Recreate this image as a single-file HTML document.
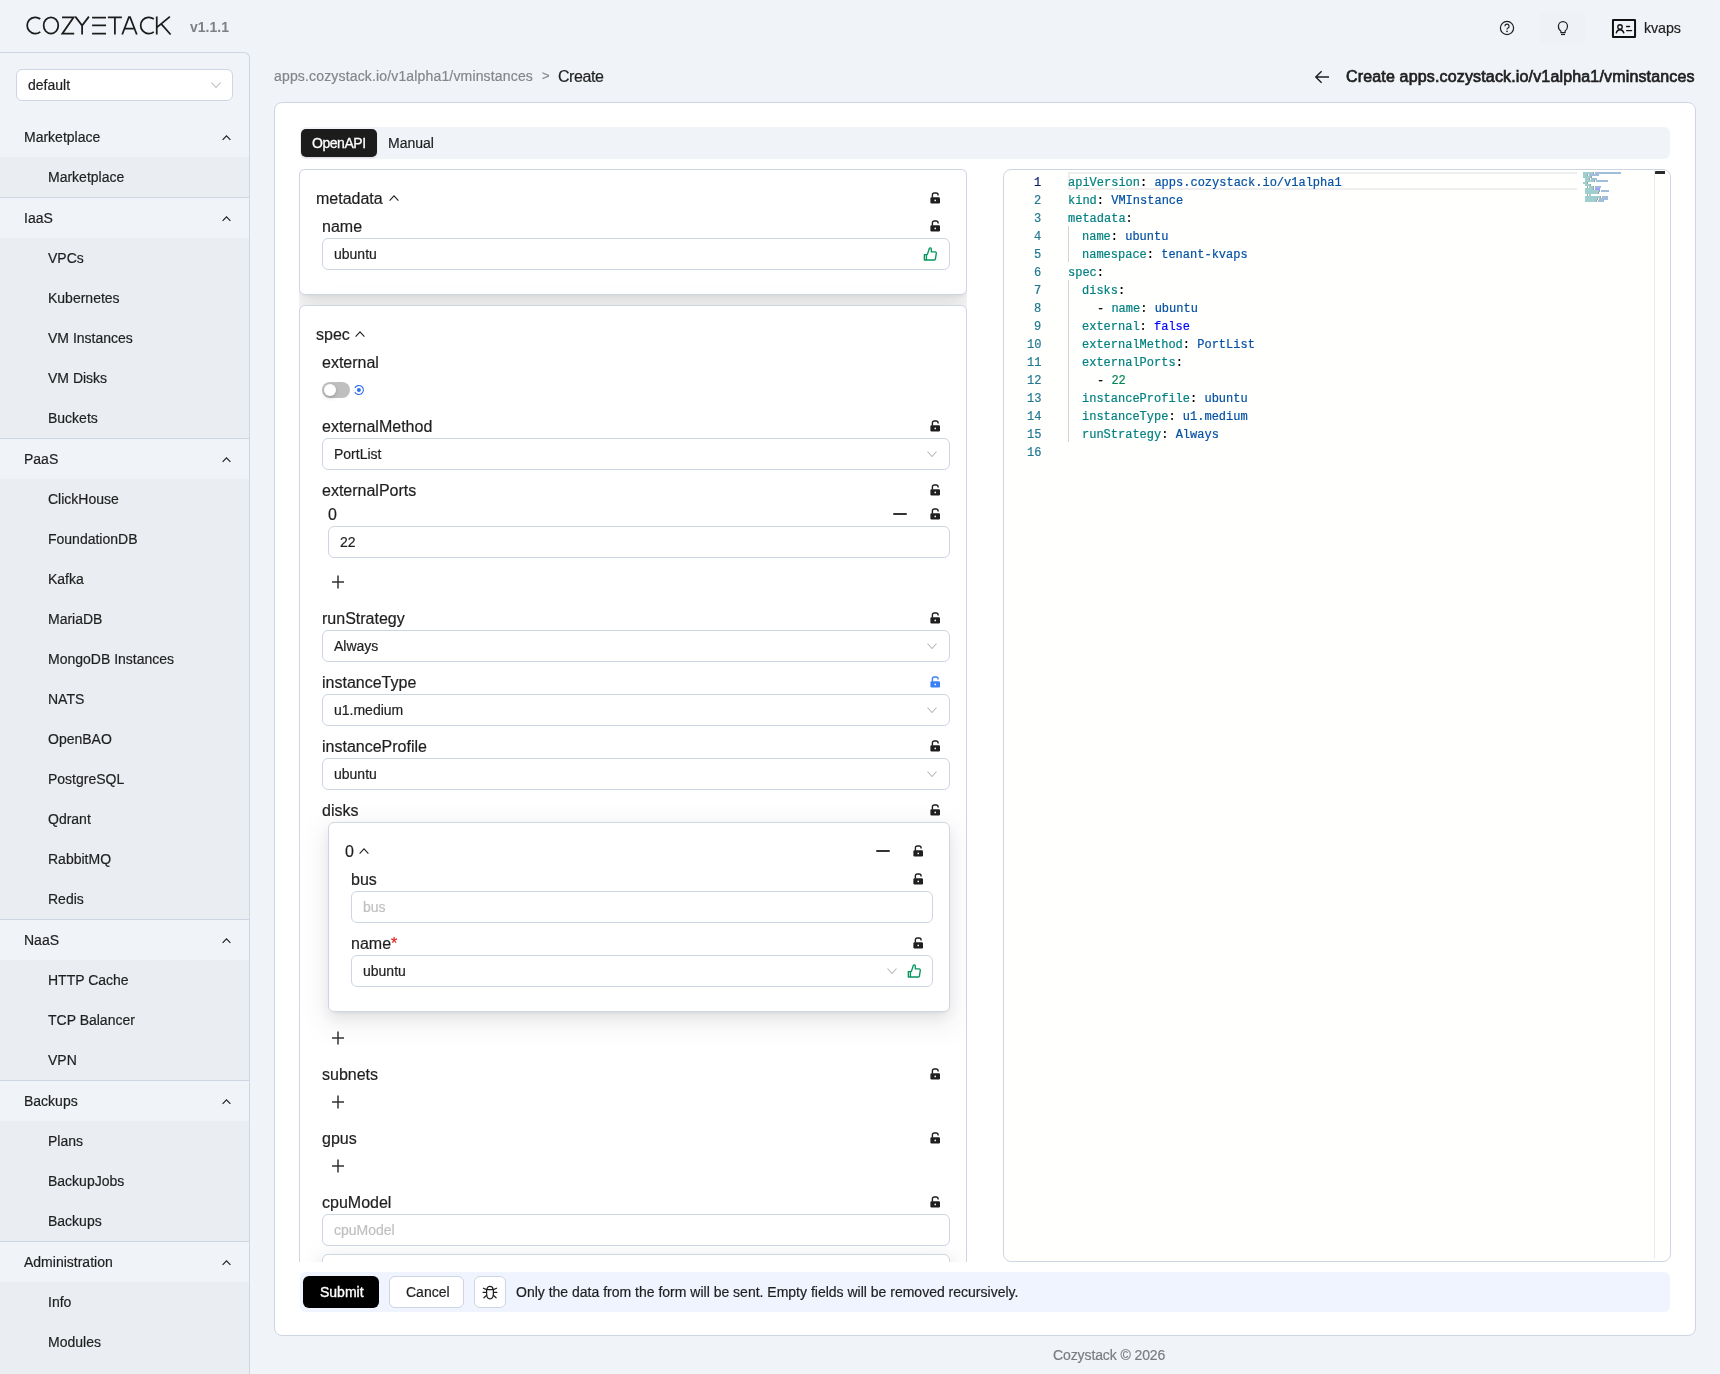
<!DOCTYPE html><html><head><meta charset="utf-8"><style>
html,body{margin:0;padding:0}
body{width:1720px;height:1374px;overflow:hidden;position:relative;background:#f0f3f8;font-family:"Liberation Sans",sans-serif;color:#1f1f1f}
.a{position:absolute;box-sizing:content-box}
.t{position:absolute;white-space:nowrap;line-height:1;will-change:transform;-webkit-text-stroke:0.2px currentColor}
svg.a{overflow:visible}
</style></head><body>
<svg class="a" style="left:0;top:0" width="200" height="52" viewBox="0 0 200 52"><g stroke="#1c1c1c" stroke-width="1.75" fill="none"><path d="M40.3 19.0 A8.15 8.15 0 1 0 40.3 31.9"/><ellipse cx="50.95" cy="25.45" rx="7.3" ry="8.15"/><path d="M62.0 17.25 H73.6 L62.3 33.65 H74.2"/><path d="M75.3 16.6 L82.1 25.6 L88.9 16.6 M82.1 25.6 V34.5"/><path d="M92.1 17.5 H106 M92.1 25.4 H106 M92.1 33.6 H106"/><path d="M107.9 17.25 H121.9 M114.9 17.25 V34.5"/><path d="M122.2 34.5 L128.9 17.2 H130.1 L136.8 34.5 M124.8 28.6 H134.2"/><path d="M153.8 19.0 A8.15 8.15 0 1 0 153.8 31.9"/><path d="M156.75 16.4 V34.5 M169.9 16.6 L157.2 27.2 M161.2 23.8 L170.6 34.5"/></g></svg>
<div class="t" style="left:190px;top:20px;font-size:14px;color:#7e8084;font-weight:700;-webkit-text-stroke:0;">v1.1.1</div>
<div class="a" style="left:1540px;top:12px;width:46px;height:32px;background:#eef1f6;border-radius:6px"></div>
<svg class="a" style="left:1499px;top:20px" width="16" height="16" viewBox="0 0 16 16"><circle cx="8" cy="8" r="6.6" stroke="#1f1f1f" stroke-width="1.2" fill="none"/><path d="M5.9 6.3 A2.1 2.1 0 1 1 8.6 8.3 C8.1 8.5 8 8.9 8 9.5" stroke="#1f1f1f" stroke-width="1.2" fill="none"/><circle cx="8" cy="11.4" r="0.8" fill="#1f1f1f"/></svg>
<svg class="a" style="left:1555px;top:20px" width="15" height="16" viewBox="0 0 15 16"><path d="M5.9 12.7 V10.9 C4.3 10 3.4 8.2 3.4 6.2 A4.55 4.55 0 0 1 12.5 6.2 C12.5 8.2 11.6 10 10.1 10.9 V12.7 Z" stroke="#1f1f1f" stroke-width="1.2" fill="none" stroke-linejoin="round"/><path d="M6 14.5 H10" stroke="#1f1f1f" stroke-width="1.2"/></svg>
<svg class="a" style="left:1611px;top:18px" width="26" height="21" viewBox="0 0 26 21"><rect x="1.95" y="2.1" width="22.1" height="16.85" rx="0.3" stroke="#111" stroke-width="2" fill="none"/><circle cx="9" cy="8.9" r="2.2" stroke="#111" stroke-width="1.35" fill="none"/><path d="M5.3 14.8 C5.8 12.7 7.2 11.7 9 11.7 C10.8 11.7 12.2 12.7 12.8 14.8" stroke="#111" stroke-width="1.35" fill="none" stroke-linecap="round"/><path d="M15.6 8.5 H18.6 M15.6 12.6 H20.6" stroke="#111" stroke-width="1.35" stroke-linecap="round"/></svg>
<div class="t" style="left:1644px;top:21px;font-size:14.3px;letter-spacing:-0.1px;">kvaps</div>
<div class="a" style="left:-10px;top:52px;width:259px;height:1340px;border-top:1px solid #cdd6e2;border-right:1px solid #cdd6e2;border-top-right-radius:6px"></div>
<div class="a" style="left:16px;top:69px;width:215px;height:30px;border:1px solid #cdd6e2;border-radius:6px;background:#fff"></div>
<div class="t" style="left:28px;top:78px;font-size:14px;">default</div>
<svg class="a" style="left:211px;top:82px" width="10" height="6" viewBox="0 0 10 6"><path d="M0.5 0.5 L5.0 5.5 L9.5 0.5" stroke="#b8b8b8" stroke-width="1.1" fill="none"/></svg>
<div class="t" style="left:24px;top:130px;font-size:14px;">Marketplace</div>
<svg class="a" style="left:221.5px;top:135.3px" width="9" height="5.4" viewBox="0 0 9 5.4"><path d="M0.6 4.800000000000001 L4.5 0.8 L8.4 4.800000000000001" stroke="#1f1f1f" stroke-width="1.15" fill="none"/></svg>
<div class="a" style="left:0px;top:157px;width:249px;height:40px;background:#eaeef3"></div>
<div class="t" style="left:48px;top:170px;font-size:14px;">Marketplace</div>
<div class="a" style="left:0px;top:197px;width:249px;height:1px;background:#cdd6e2"></div>
<div class="t" style="left:24px;top:211px;font-size:14px;">IaaS</div>
<svg class="a" style="left:221.5px;top:216.3px" width="9" height="5.4" viewBox="0 0 9 5.4"><path d="M0.6 4.800000000000001 L4.5 0.8 L8.4 4.800000000000001" stroke="#1f1f1f" stroke-width="1.15" fill="none"/></svg>
<div class="a" style="left:0px;top:238px;width:249px;height:200px;background:#eaeef3"></div>
<div class="t" style="left:48px;top:251px;font-size:14px;">VPCs</div>
<div class="t" style="left:48px;top:291px;font-size:14px;">Kubernetes</div>
<div class="t" style="left:48px;top:331px;font-size:14px;">VM Instances</div>
<div class="t" style="left:48px;top:371px;font-size:14px;">VM Disks</div>
<div class="t" style="left:48px;top:411px;font-size:14px;">Buckets</div>
<div class="a" style="left:0px;top:438px;width:249px;height:1px;background:#cdd6e2"></div>
<div class="t" style="left:24px;top:452px;font-size:14px;">PaaS</div>
<svg class="a" style="left:221.5px;top:457.3px" width="9" height="5.4" viewBox="0 0 9 5.4"><path d="M0.6 4.800000000000001 L4.5 0.8 L8.4 4.800000000000001" stroke="#1f1f1f" stroke-width="1.15" fill="none"/></svg>
<div class="a" style="left:0px;top:479px;width:249px;height:440px;background:#eaeef3"></div>
<div class="t" style="left:48px;top:492px;font-size:14px;">ClickHouse</div>
<div class="t" style="left:48px;top:532px;font-size:14px;">FoundationDB</div>
<div class="t" style="left:48px;top:572px;font-size:14px;">Kafka</div>
<div class="t" style="left:48px;top:612px;font-size:14px;">MariaDB</div>
<div class="t" style="left:48px;top:652px;font-size:14px;">MongoDB Instances</div>
<div class="t" style="left:48px;top:692px;font-size:14px;">NATS</div>
<div class="t" style="left:48px;top:732px;font-size:14px;">OpenBAO</div>
<div class="t" style="left:48px;top:772px;font-size:14px;">PostgreSQL</div>
<div class="t" style="left:48px;top:812px;font-size:14px;">Qdrant</div>
<div class="t" style="left:48px;top:852px;font-size:14px;">RabbitMQ</div>
<div class="t" style="left:48px;top:892px;font-size:14px;">Redis</div>
<div class="a" style="left:0px;top:919px;width:249px;height:1px;background:#cdd6e2"></div>
<div class="t" style="left:24px;top:933px;font-size:14px;">NaaS</div>
<svg class="a" style="left:221.5px;top:938.3px" width="9" height="5.4" viewBox="0 0 9 5.4"><path d="M0.6 4.800000000000001 L4.5 0.8 L8.4 4.800000000000001" stroke="#1f1f1f" stroke-width="1.15" fill="none"/></svg>
<div class="a" style="left:0px;top:960px;width:249px;height:120px;background:#eaeef3"></div>
<div class="t" style="left:48px;top:973px;font-size:14px;">HTTP Cache</div>
<div class="t" style="left:48px;top:1013px;font-size:14px;">TCP Balancer</div>
<div class="t" style="left:48px;top:1053px;font-size:14px;">VPN</div>
<div class="a" style="left:0px;top:1080px;width:249px;height:1px;background:#cdd6e2"></div>
<div class="t" style="left:24px;top:1094px;font-size:14px;">Backups</div>
<svg class="a" style="left:221.5px;top:1099.3px" width="9" height="5.4" viewBox="0 0 9 5.4"><path d="M0.6 4.800000000000001 L4.5 0.8 L8.4 4.800000000000001" stroke="#1f1f1f" stroke-width="1.15" fill="none"/></svg>
<div class="a" style="left:0px;top:1121px;width:249px;height:120px;background:#eaeef3"></div>
<div class="t" style="left:48px;top:1134px;font-size:14px;">Plans</div>
<div class="t" style="left:48px;top:1174px;font-size:14px;">BackupJobs</div>
<div class="t" style="left:48px;top:1214px;font-size:14px;">Backups</div>
<div class="a" style="left:0px;top:1241px;width:249px;height:1px;background:#cdd6e2"></div>
<div class="t" style="left:24px;top:1255px;font-size:14px;">Administration</div>
<svg class="a" style="left:221.5px;top:1260.3px" width="9" height="5.4" viewBox="0 0 9 5.4"><path d="M0.6 4.800000000000001 L4.5 0.8 L8.4 4.800000000000001" stroke="#1f1f1f" stroke-width="1.15" fill="none"/></svg>
<div class="a" style="left:0px;top:1282px;width:249px;height:92px;background:#eaeef3"></div>
<div class="t" style="left:48px;top:1295px;font-size:14px;">Info</div>
<div class="t" style="left:48px;top:1335px;font-size:14px;">Modules</div>
<div class="t" style="left:274px;top:69px;font-size:14px;color:#84868a;letter-spacing:0.16px;">apps.cozystack.io/v1alpha1/vminstances</div>
<div class="t" style="left:542px;top:69px;font-size:13px;color:#84868a;">&gt;</div>
<div class="t" style="left:557.5px;top:69px;font-size:16px;letter-spacing:-0.45px;">Create</div>
<svg class="a" style="left:1314px;top:70px" width="16" height="14" viewBox="0 0 16 14"><path d="M15 7 H2 M7.6 1.3 L1.8 7 L7.6 12.7" stroke="#1f1f1f" stroke-width="1.4" fill="none"/></svg>
<div class="t" style="left:1346px;top:69px;font-size:16px;letter-spacing:0.16px;-webkit-text-stroke:0.7px #1f1f1f;">Create apps.cozystack.io/v1alpha1/vminstances</div>
<div class="a" style="left:274px;top:102px;width:1420px;height:1232px;border:1px solid #cdd6e2;border-radius:8px;background:#fff"></div>
<div class="a" style="left:300px;top:127px;width:1370px;height:32px;background:#f0f3f8;border-radius:6px"></div>
<div class="a" style="left:301px;top:129px;width:76px;height:28px;background:#1c1c1c;border-radius:5px;box-shadow:0 1px 2px rgba(0,0,0,0.1)"></div>
<div class="t" style="left:312px;top:136px;font-size:14px;color:#fff;letter-spacing:-0.45px;-webkit-text-stroke:0.3px #fff;">OpenAPI</div>
<div class="t" style="left:388px;top:136px;font-size:14px;">Manual</div>
<div class="a" style="left:299px;top:169px;width:668px;height:1093px;overflow:hidden">
<div class="a" style="left:0px;top:0px;width:666px;height:124px;border:1px solid #cdd6e2;border-radius:6px;background:#fff;box-shadow:0 6px 16px 0 rgba(0,0,0,0.08),0 3px 6px -4px rgba(0,0,0,0.12),0 9px 28px 8px rgba(0,0,0,0.05)"></div>
<div class="a" style="left:0px;top:136px;width:666px;height:1200px;border:1px solid #cdd6e2;border-radius:6px;background:#fff;box-shadow:0 6px 16px 0 rgba(0,0,0,0.08),0 3px 6px -4px rgba(0,0,0,0.12),0 9px 28px 8px rgba(0,0,0,0.05)"></div>
<div class="t" style="left:17px;top:22px;font-size:16px;">metadata</div>
<svg class="a" style="left:90px;top:25.80000000000001px" width="10" height="6.2" viewBox="0 0 10 6.2"><path d="M0.6 5.6000000000000005 L5.0 0.8 L9.4 5.6000000000000005" stroke="#1f1f1f" stroke-width="1.1" fill="none"/></svg>
<svg class="a" style="left:629.7px;top:22.099999999999994px" width="12" height="13" viewBox="0 0 12 13"><rect x="1.4" y="6.3" width="9.6" height="6.1" rx="1.2" fill="#1f1f1f"/><path d="M3.4 6.7 V4.0 Q3.4 2.0 5.4 2.0 H7.1 Q9.1 2.0 9.1 4.0 V4.4" stroke="#1f1f1f" stroke-width="1.4" fill="none"/><rect x="5.5" y="8.7" width="1.5" height="1.5" fill="#fff"/></svg>
<div class="t" style="left:23px;top:50px;font-size:16px;">name</div>
<svg class="a" style="left:629.7px;top:50.099999999999994px" width="12" height="13" viewBox="0 0 12 13"><rect x="1.4" y="6.3" width="9.6" height="6.1" rx="1.2" fill="#1f1f1f"/><path d="M3.4 6.7 V4.0 Q3.4 2.0 5.4 2.0 H7.1 Q9.1 2.0 9.1 4.0 V4.4" stroke="#1f1f1f" stroke-width="1.4" fill="none"/><rect x="5.5" y="8.7" width="1.5" height="1.5" fill="#fff"/></svg>
<div class="a" style="left:23px;top:69px;width:626px;height:30px;border:1px solid #cdd6e2;border-radius:6px;background:#fff"></div>
<div class="t" style="left:35px;top:78px;font-size:14px;">ubuntu</div>
<svg class="a" style="left:623.5px;top:78px" width="15" height="15" viewBox="0 0 15 15"><path d="M1.35 7.6 H4.3 L6.3 1.5 C6.7 0.7 8.3 0.6 8.3 2.1 V4.9 H12.2 C12.9 4.9 13.4 5.5 13.3 6.3 L12.4 12.1 C12.3 12.6 11.9 12.95 11.4 12.95 H1.35 Z M3.4 8.2 V12.6" stroke="#04965c" stroke-width="1.35" fill="none" stroke-linejoin="round"/></svg>
<div class="t" style="left:17px;top:158px;font-size:16px;">spec</div>
<svg class="a" style="left:56px;top:162.2px" width="10" height="6.2" viewBox="0 0 10 6.2"><path d="M0.6 5.6000000000000005 L5.0 0.8 L9.4 5.6000000000000005" stroke="#1f1f1f" stroke-width="1.1" fill="none"/></svg>
<div class="t" style="left:23px;top:186px;font-size:16px;">external</div>
<div class="a" style="left:23px;top:213px;width:28px;height:16px;background:#bfbfbf;border-radius:8px"></div>
<div class="a" style="left:25px;top:215px;width:12px;height:12px;background:#fff;border-radius:6px;box-shadow:0 2px 4px rgba(0,35,11,0.2)"></div>
<svg class="a" style="left:54px;top:215px" width="12" height="12" viewBox="0 0 12 12"><path d="M1.82 4.1 A4.5 4.5 0 1 1 1.82 7.9" stroke="#2f6fef" stroke-width="1.1" fill="none"/><circle cx="5.9" cy="6" r="2" fill="#2f6fef"/></svg>
<div class="t" style="left:23px;top:250px;font-size:16px;">externalMethod</div>
<svg class="a" style="left:629.7px;top:250.10000000000002px" width="12" height="13" viewBox="0 0 12 13"><rect x="1.4" y="6.3" width="9.6" height="6.1" rx="1.2" fill="#1f1f1f"/><path d="M3.4 6.7 V4.0 Q3.4 2.0 5.4 2.0 H7.1 Q9.1 2.0 9.1 4.0 V4.4" stroke="#1f1f1f" stroke-width="1.4" fill="none"/><rect x="5.5" y="8.7" width="1.5" height="1.5" fill="#fff"/></svg>
<div class="a" style="left:23px;top:269px;width:626px;height:30px;border:1px solid #cdd6e2;border-radius:6px;background:#fff"></div>
<div class="t" style="left:35px;top:278px;font-size:14px;">PortList</div>
<svg class="a" style="left:628px;top:282px" width="10" height="6" viewBox="0 0 10 6"><path d="M0.5 0.5 L5.0 5.5 L9.5 0.5" stroke="#b8b8b8" stroke-width="1.1" fill="none"/></svg>
<div class="t" style="left:23px;top:314px;font-size:16px;">externalPorts</div>
<svg class="a" style="left:629.7px;top:314.1px" width="12" height="13" viewBox="0 0 12 13"><rect x="1.4" y="6.3" width="9.6" height="6.1" rx="1.2" fill="#1f1f1f"/><path d="M3.4 6.7 V4.0 Q3.4 2.0 5.4 2.0 H7.1 Q9.1 2.0 9.1 4.0 V4.4" stroke="#1f1f1f" stroke-width="1.4" fill="none"/><rect x="5.5" y="8.7" width="1.5" height="1.5" fill="#fff"/></svg>
<div class="t" style="left:29px;top:338px;font-size:16px;">0</div>
<div class="a" style="left:594px;top:344px;width:14px;height:2px;background:#333;border-radius:1px"></div>
<svg class="a" style="left:629.7px;top:338.1px" width="12" height="13" viewBox="0 0 12 13"><rect x="1.4" y="6.3" width="9.6" height="6.1" rx="1.2" fill="#1f1f1f"/><path d="M3.4 6.7 V4.0 Q3.4 2.0 5.4 2.0 H7.1 Q9.1 2.0 9.1 4.0 V4.4" stroke="#1f1f1f" stroke-width="1.4" fill="none"/><rect x="5.5" y="8.7" width="1.5" height="1.5" fill="#fff"/></svg>
<div class="a" style="left:29px;top:357px;width:620px;height:30px;border:1px solid #cdd6e2;border-radius:6px;background:#fff"></div>
<div class="t" style="left:41px;top:366px;font-size:14px;">22</div>
<svg class="a" style="left:32px;top:406px" width="14" height="14" viewBox="0 0 14 14"><path d="M1 7 H13 M7 0.5 V13.5" stroke="#333" stroke-width="1.5"/></svg>
<div class="t" style="left:23px;top:442px;font-size:16px;">runStrategy</div>
<svg class="a" style="left:629.7px;top:442.1px" width="12" height="13" viewBox="0 0 12 13"><rect x="1.4" y="6.3" width="9.6" height="6.1" rx="1.2" fill="#1f1f1f"/><path d="M3.4 6.7 V4.0 Q3.4 2.0 5.4 2.0 H7.1 Q9.1 2.0 9.1 4.0 V4.4" stroke="#1f1f1f" stroke-width="1.4" fill="none"/><rect x="5.5" y="8.7" width="1.5" height="1.5" fill="#fff"/></svg>
<div class="a" style="left:23px;top:461px;width:626px;height:30px;border:1px solid #cdd6e2;border-radius:6px;background:#fff"></div>
<div class="t" style="left:35px;top:470px;font-size:14px;">Always</div>
<svg class="a" style="left:628px;top:474px" width="10" height="6" viewBox="0 0 10 6"><path d="M0.5 0.5 L5.0 5.5 L9.5 0.5" stroke="#b8b8b8" stroke-width="1.1" fill="none"/></svg>
<div class="t" style="left:23px;top:506px;font-size:16px;">instanceType</div>
<svg class="a" style="left:629.7px;top:506.1px" width="12" height="13" viewBox="0 0 12 13"><rect x="1.4" y="6.3" width="9.6" height="6.1" rx="1.2" fill="#3b7ff5"/><path d="M3.4 6.7 V4.0 Q3.4 2.0 5.4 2.0 H7.1 Q9.1 2.0 9.1 4.0 V4.4" stroke="#3b7ff5" stroke-width="1.4" fill="none"/><rect x="5.5" y="8.7" width="1.5" height="1.5" fill="#fff"/></svg>
<div class="a" style="left:23px;top:525px;width:626px;height:30px;border:1px solid #cdd6e2;border-radius:6px;background:#fff"></div>
<div class="t" style="left:35px;top:534px;font-size:14px;">u1.medium</div>
<svg class="a" style="left:628px;top:538px" width="10" height="6" viewBox="0 0 10 6"><path d="M0.5 0.5 L5.0 5.5 L9.5 0.5" stroke="#b8b8b8" stroke-width="1.1" fill="none"/></svg>
<div class="t" style="left:23px;top:570px;font-size:16px;">instanceProfile</div>
<svg class="a" style="left:629.7px;top:570.1px" width="12" height="13" viewBox="0 0 12 13"><rect x="1.4" y="6.3" width="9.6" height="6.1" rx="1.2" fill="#1f1f1f"/><path d="M3.4 6.7 V4.0 Q3.4 2.0 5.4 2.0 H7.1 Q9.1 2.0 9.1 4.0 V4.4" stroke="#1f1f1f" stroke-width="1.4" fill="none"/><rect x="5.5" y="8.7" width="1.5" height="1.5" fill="#fff"/></svg>
<div class="a" style="left:23px;top:589px;width:626px;height:30px;border:1px solid #cdd6e2;border-radius:6px;background:#fff"></div>
<div class="t" style="left:35px;top:598px;font-size:14px;">ubuntu</div>
<svg class="a" style="left:628px;top:602px" width="10" height="6" viewBox="0 0 10 6"><path d="M0.5 0.5 L5.0 5.5 L9.5 0.5" stroke="#b8b8b8" stroke-width="1.1" fill="none"/></svg>
<div class="t" style="left:23px;top:634px;font-size:16px;">disks</div>
<svg class="a" style="left:629.7px;top:634.1px" width="12" height="13" viewBox="0 0 12 13"><rect x="1.4" y="6.3" width="9.6" height="6.1" rx="1.2" fill="#1f1f1f"/><path d="M3.4 6.7 V4.0 Q3.4 2.0 5.4 2.0 H7.1 Q9.1 2.0 9.1 4.0 V4.4" stroke="#1f1f1f" stroke-width="1.4" fill="none"/><rect x="5.5" y="8.7" width="1.5" height="1.5" fill="#fff"/></svg>
<div class="a" style="left:29px;top:653px;width:620px;height:188px;border:1px solid #cdd6e2;border-radius:6px;background:#fff;box-shadow:0 6px 16px 0 rgba(0,0,0,0.08),0 3px 6px -4px rgba(0,0,0,0.12),0 9px 28px 8px rgba(0,0,0,0.05)"></div>
<div class="t" style="left:46px;top:675px;font-size:16px;">0</div>
<svg class="a" style="left:60px;top:678.7px" width="10" height="6.2" viewBox="0 0 10 6.2"><path d="M0.6 5.6000000000000005 L5.0 0.8 L9.4 5.6000000000000005" stroke="#1f1f1f" stroke-width="1.1" fill="none"/></svg>
<div class="a" style="left:577px;top:681px;width:14px;height:2px;background:#333;border-radius:1px"></div>
<svg class="a" style="left:612.7px;top:675.1px" width="12" height="13" viewBox="0 0 12 13"><rect x="1.4" y="6.3" width="9.6" height="6.1" rx="1.2" fill="#1f1f1f"/><path d="M3.4 6.7 V4.0 Q3.4 2.0 5.4 2.0 H7.1 Q9.1 2.0 9.1 4.0 V4.4" stroke="#1f1f1f" stroke-width="1.4" fill="none"/><rect x="5.5" y="8.7" width="1.5" height="1.5" fill="#fff"/></svg>
<div class="t" style="left:52px;top:703px;font-size:16px;">bus</div>
<svg class="a" style="left:612.7px;top:703.1px" width="12" height="13" viewBox="0 0 12 13"><rect x="1.4" y="6.3" width="9.6" height="6.1" rx="1.2" fill="#1f1f1f"/><path d="M3.4 6.7 V4.0 Q3.4 2.0 5.4 2.0 H7.1 Q9.1 2.0 9.1 4.0 V4.4" stroke="#1f1f1f" stroke-width="1.4" fill="none"/><rect x="5.5" y="8.7" width="1.5" height="1.5" fill="#fff"/></svg>
<div class="a" style="left:52px;top:722px;width:580px;height:30px;border:1px solid #cdd6e2;border-radius:6px;background:#fff"></div>
<div class="t" style="left:64px;top:731px;font-size:14px;color:#bfbfbf;">bus</div>
<div class="t" style="left:52px;top:767px;font-size:16px;">name</div>
<div class="t" style="left:92.046875px;top:767px;font-size:16px;color:#e01b1b;">*</div>
<svg class="a" style="left:612.7px;top:767.1px" width="12" height="13" viewBox="0 0 12 13"><rect x="1.4" y="6.3" width="9.6" height="6.1" rx="1.2" fill="#1f1f1f"/><path d="M3.4 6.7 V4.0 Q3.4 2.0 5.4 2.0 H7.1 Q9.1 2.0 9.1 4.0 V4.4" stroke="#1f1f1f" stroke-width="1.4" fill="none"/><rect x="5.5" y="8.7" width="1.5" height="1.5" fill="#fff"/></svg>
<div class="a" style="left:52px;top:786px;width:580px;height:30px;border:1px solid #cdd6e2;border-radius:6px;background:#fff"></div>
<div class="t" style="left:64px;top:795px;font-size:14px;">ubuntu</div>
<svg class="a" style="left:588px;top:799px" width="10" height="6" viewBox="0 0 10 6"><path d="M0.5 0.5 L5.0 5.5 L9.5 0.5" stroke="#b8b8b8" stroke-width="1.1" fill="none"/></svg>
<svg class="a" style="left:607.5px;top:795px" width="15" height="15" viewBox="0 0 15 15"><path d="M1.35 7.6 H4.3 L6.3 1.5 C6.7 0.7 8.3 0.6 8.3 2.1 V4.9 H12.2 C12.9 4.9 13.4 5.5 13.3 6.3 L12.4 12.1 C12.3 12.6 11.9 12.95 11.4 12.95 H1.35 Z M3.4 8.2 V12.6" stroke="#04965c" stroke-width="1.35" fill="none" stroke-linejoin="round"/></svg>
<svg class="a" style="left:32px;top:861.7px" width="14" height="14" viewBox="0 0 14 14"><path d="M1 7 H13 M7 0.5 V13.5" stroke="#333" stroke-width="1.5"/></svg>
<div class="t" style="left:23px;top:898px;font-size:16px;">subnets</div>
<svg class="a" style="left:629.7px;top:898.0999999999999px" width="12" height="13" viewBox="0 0 12 13"><rect x="1.4" y="6.3" width="9.6" height="6.1" rx="1.2" fill="#1f1f1f"/><path d="M3.4 6.7 V4.0 Q3.4 2.0 5.4 2.0 H7.1 Q9.1 2.0 9.1 4.0 V4.4" stroke="#1f1f1f" stroke-width="1.4" fill="none"/><rect x="5.5" y="8.7" width="1.5" height="1.5" fill="#fff"/></svg>
<svg class="a" style="left:32px;top:925.7px" width="14" height="14" viewBox="0 0 14 14"><path d="M1 7 H13 M7 0.5 V13.5" stroke="#333" stroke-width="1.5"/></svg>
<div class="t" style="left:23px;top:962px;font-size:16px;">gpus</div>
<svg class="a" style="left:629.7px;top:962.0999999999999px" width="12" height="13" viewBox="0 0 12 13"><rect x="1.4" y="6.3" width="9.6" height="6.1" rx="1.2" fill="#1f1f1f"/><path d="M3.4 6.7 V4.0 Q3.4 2.0 5.4 2.0 H7.1 Q9.1 2.0 9.1 4.0 V4.4" stroke="#1f1f1f" stroke-width="1.4" fill="none"/><rect x="5.5" y="8.7" width="1.5" height="1.5" fill="#fff"/></svg>
<svg class="a" style="left:32px;top:989.7px" width="14" height="14" viewBox="0 0 14 14"><path d="M1 7 H13 M7 0.5 V13.5" stroke="#333" stroke-width="1.5"/></svg>
<div class="a" style="left:23px;top:1085px;width:626px;height:200px;border:1px solid #cdd6e2;border-radius:6px;background:#fff;box-shadow:0 6px 16px 0 rgba(0,0,0,0.08),0 3px 6px -4px rgba(0,0,0,0.12),0 9px 28px 8px rgba(0,0,0,0.05)"></div>
<div class="t" style="left:23px;top:1026px;font-size:16px;">cpuModel</div>
<svg class="a" style="left:629.7px;top:1026.1px" width="12" height="13" viewBox="0 0 12 13"><rect x="1.4" y="6.3" width="9.6" height="6.1" rx="1.2" fill="#1f1f1f"/><path d="M3.4 6.7 V4.0 Q3.4 2.0 5.4 2.0 H7.1 Q9.1 2.0 9.1 4.0 V4.4" stroke="#1f1f1f" stroke-width="1.4" fill="none"/><rect x="5.5" y="8.7" width="1.5" height="1.5" fill="#fff"/></svg>
<div class="a" style="left:23px;top:1045px;width:626px;height:30px;border:1px solid #cdd6e2;border-radius:6px;background:#fff"></div>
<div class="t" style="left:35px;top:1054px;font-size:14px;color:#bfbfbf;">cpuModel</div>
</div>
<div class="a" style="left:1003px;top:169px;width:666px;height:1091px;border:1px solid #cdd6e2;border-radius:8px;background:#fffffe;overflow:hidden"></div>
<div class="a" style="left:1068px;top:172px;width:507px;height:14px;border:2px solid #eeeeee;border-right:none"></div>
<div class="a" style="left:1068px;top:226px;width:1px;height:36px;background:#d3d3d3"></div>
<div class="a" style="left:1068px;top:280px;width:1px;height:162px;background:#d3d3d3"></div>
<div class="t" style="left:1034.3px;top:177px;font-size:12px;color:#0b216f;font-family:'Liberation Mono',monospace;">1</div>
<div class="t" style="left:1068.0px;top:177px;font-size:12px;font-family:'Liberation Mono',monospace;"><span style="color:#008080">apiVersion</span><span style="color:#000000">:&nbsp;</span><span style="color:#0451a5">apps.cozystack.io/v1alpha1</span></div>
<div class="a" style="left:1583px;top:172px;width:10px;height:1.5px;background:#008080;opacity:0.38"></div>
<div class="a" style="left:1593px;top:172px;width:1px;height:1.5px;background:#000000;opacity:0.38"></div>
<div class="a" style="left:1595px;top:172px;width:26px;height:1.5px;background:#0451a5;opacity:0.38"></div>
<div class="t" style="left:1034.3px;top:195px;font-size:12px;color:#237893;font-family:'Liberation Mono',monospace;">2</div>
<div class="t" style="left:1068.0px;top:195px;font-size:12px;font-family:'Liberation Mono',monospace;"><span style="color:#008080">kind</span><span style="color:#000000">:&nbsp;</span><span style="color:#0451a5">VMInstance</span></div>
<div class="a" style="left:1583px;top:174px;width:4px;height:1.5px;background:#008080;opacity:0.38"></div>
<div class="a" style="left:1587px;top:174px;width:1px;height:1.5px;background:#000000;opacity:0.38"></div>
<div class="a" style="left:1589px;top:174px;width:10px;height:1.5px;background:#0451a5;opacity:0.38"></div>
<div class="t" style="left:1034.3px;top:213px;font-size:12px;color:#237893;font-family:'Liberation Mono',monospace;">3</div>
<div class="t" style="left:1068.0px;top:213px;font-size:12px;font-family:'Liberation Mono',monospace;"><span style="color:#008080">metadata</span><span style="color:#000000">:</span></div>
<div class="a" style="left:1583px;top:176px;width:8px;height:1.5px;background:#008080;opacity:0.38"></div>
<div class="a" style="left:1591px;top:176px;width:1px;height:1.5px;background:#000000;opacity:0.38"></div>
<div class="t" style="left:1034.3px;top:231px;font-size:12px;color:#237893;font-family:'Liberation Mono',monospace;">4</div>
<div class="t" style="left:1082.4px;top:231px;font-size:12px;font-family:'Liberation Mono',monospace;"><span style="color:#008080">name</span><span style="color:#000000">:&nbsp;</span><span style="color:#0451a5">ubuntu</span></div>
<div class="a" style="left:1585px;top:178px;width:4px;height:1.5px;background:#008080;opacity:0.38"></div>
<div class="a" style="left:1589px;top:178px;width:1px;height:1.5px;background:#000000;opacity:0.38"></div>
<div class="a" style="left:1591px;top:178px;width:6px;height:1.5px;background:#0451a5;opacity:0.38"></div>
<div class="t" style="left:1034.3px;top:249px;font-size:12px;color:#237893;font-family:'Liberation Mono',monospace;">5</div>
<div class="t" style="left:1082.4px;top:249px;font-size:12px;font-family:'Liberation Mono',monospace;"><span style="color:#008080">namespace</span><span style="color:#000000">:&nbsp;</span><span style="color:#0451a5">tenant-kvaps</span></div>
<div class="a" style="left:1585px;top:180px;width:9px;height:1.5px;background:#008080;opacity:0.38"></div>
<div class="a" style="left:1594px;top:180px;width:1px;height:1.5px;background:#000000;opacity:0.38"></div>
<div class="a" style="left:1596px;top:180px;width:12px;height:1.5px;background:#0451a5;opacity:0.38"></div>
<div class="t" style="left:1034.3px;top:267px;font-size:12px;color:#237893;font-family:'Liberation Mono',monospace;">6</div>
<div class="t" style="left:1068.0px;top:267px;font-size:12px;font-family:'Liberation Mono',monospace;"><span style="color:#008080">spec</span><span style="color:#000000">:</span></div>
<div class="a" style="left:1583px;top:182px;width:4px;height:1.5px;background:#008080;opacity:0.38"></div>
<div class="a" style="left:1587px;top:182px;width:1px;height:1.5px;background:#000000;opacity:0.38"></div>
<div class="t" style="left:1034.3px;top:285px;font-size:12px;color:#237893;font-family:'Liberation Mono',monospace;">7</div>
<div class="t" style="left:1082.4px;top:285px;font-size:12px;font-family:'Liberation Mono',monospace;"><span style="color:#008080">disks</span><span style="color:#000000">:</span></div>
<div class="a" style="left:1585px;top:184px;width:5px;height:1.5px;background:#008080;opacity:0.38"></div>
<div class="a" style="left:1590px;top:184px;width:1px;height:1.5px;background:#000000;opacity:0.38"></div>
<div class="t" style="left:1034.3px;top:303px;font-size:12px;color:#237893;font-family:'Liberation Mono',monospace;">8</div>
<div class="t" style="left:1096.8px;top:303px;font-size:12px;font-family:'Liberation Mono',monospace;"><span style="color:#000000">-&nbsp;</span><span style="color:#008080">name</span><span style="color:#000000">:&nbsp;</span><span style="color:#0451a5">ubuntu</span></div>
<div class="a" style="left:1587px;top:186px;width:1px;height:1.5px;background:#000000;opacity:0.38"></div>
<div class="a" style="left:1589px;top:186px;width:4px;height:1.5px;background:#008080;opacity:0.38"></div>
<div class="a" style="left:1593px;top:186px;width:1px;height:1.5px;background:#000000;opacity:0.38"></div>
<div class="a" style="left:1595px;top:186px;width:6px;height:1.5px;background:#0451a5;opacity:0.38"></div>
<div class="t" style="left:1034.3px;top:321px;font-size:12px;color:#237893;font-family:'Liberation Mono',monospace;">9</div>
<div class="t" style="left:1082.4px;top:321px;font-size:12px;font-family:'Liberation Mono',monospace;"><span style="color:#008080">external</span><span style="color:#000000">:&nbsp;</span><span style="color:#0000ff">false</span></div>
<div class="a" style="left:1585px;top:188px;width:8px;height:1.5px;background:#008080;opacity:0.38"></div>
<div class="a" style="left:1593px;top:188px;width:1px;height:1.5px;background:#000000;opacity:0.38"></div>
<div class="a" style="left:1595px;top:188px;width:5px;height:1.5px;background:#0000ff;opacity:0.38"></div>
<div class="t" style="left:1027.1px;top:339px;font-size:12px;color:#237893;font-family:'Liberation Mono',monospace;">10</div>
<div class="t" style="left:1082.4px;top:339px;font-size:12px;font-family:'Liberation Mono',monospace;"><span style="color:#008080">externalMethod</span><span style="color:#000000">:&nbsp;</span><span style="color:#0451a5">PortList</span></div>
<div class="a" style="left:1585px;top:190px;width:14px;height:1.5px;background:#008080;opacity:0.38"></div>
<div class="a" style="left:1599px;top:190px;width:1px;height:1.5px;background:#000000;opacity:0.38"></div>
<div class="a" style="left:1601px;top:190px;width:8px;height:1.5px;background:#0451a5;opacity:0.38"></div>
<div class="t" style="left:1027.1px;top:357px;font-size:12px;color:#237893;font-family:'Liberation Mono',monospace;">11</div>
<div class="t" style="left:1082.4px;top:357px;font-size:12px;font-family:'Liberation Mono',monospace;"><span style="color:#008080">externalPorts</span><span style="color:#000000">:</span></div>
<div class="a" style="left:1585px;top:192px;width:13px;height:1.5px;background:#008080;opacity:0.38"></div>
<div class="a" style="left:1598px;top:192px;width:1px;height:1.5px;background:#000000;opacity:0.38"></div>
<div class="t" style="left:1027.1px;top:375px;font-size:12px;color:#237893;font-family:'Liberation Mono',monospace;">12</div>
<div class="t" style="left:1096.8px;top:375px;font-size:12px;font-family:'Liberation Mono',monospace;"><span style="color:#000000">-&nbsp;</span><span style="color:#098658">22</span></div>
<div class="a" style="left:1587px;top:194px;width:1px;height:1.5px;background:#000000;opacity:0.38"></div>
<div class="a" style="left:1589px;top:194px;width:2px;height:1.5px;background:#098658;opacity:0.38"></div>
<div class="t" style="left:1027.1px;top:393px;font-size:12px;color:#237893;font-family:'Liberation Mono',monospace;">13</div>
<div class="t" style="left:1082.4px;top:393px;font-size:12px;font-family:'Liberation Mono',monospace;"><span style="color:#008080">instanceProfile</span><span style="color:#000000">:&nbsp;</span><span style="color:#0451a5">ubuntu</span></div>
<div class="a" style="left:1585px;top:196px;width:15px;height:1.5px;background:#008080;opacity:0.38"></div>
<div class="a" style="left:1600px;top:196px;width:1px;height:1.5px;background:#000000;opacity:0.38"></div>
<div class="a" style="left:1602px;top:196px;width:6px;height:1.5px;background:#0451a5;opacity:0.38"></div>
<div class="t" style="left:1027.1px;top:411px;font-size:12px;color:#237893;font-family:'Liberation Mono',monospace;">14</div>
<div class="t" style="left:1082.4px;top:411px;font-size:12px;font-family:'Liberation Mono',monospace;"><span style="color:#008080">instanceType</span><span style="color:#000000">:&nbsp;</span><span style="color:#0451a5">u1.medium</span></div>
<div class="a" style="left:1585px;top:198px;width:12px;height:1.5px;background:#008080;opacity:0.38"></div>
<div class="a" style="left:1597px;top:198px;width:1px;height:1.5px;background:#000000;opacity:0.38"></div>
<div class="a" style="left:1599px;top:198px;width:9px;height:1.5px;background:#0451a5;opacity:0.38"></div>
<div class="t" style="left:1027.1px;top:429px;font-size:12px;color:#237893;font-family:'Liberation Mono',monospace;">15</div>
<div class="t" style="left:1082.4px;top:429px;font-size:12px;font-family:'Liberation Mono',monospace;"><span style="color:#008080">runStrategy</span><span style="color:#000000">:&nbsp;</span><span style="color:#0451a5">Always</span></div>
<div class="a" style="left:1585px;top:200px;width:11px;height:1.5px;background:#008080;opacity:0.38"></div>
<div class="a" style="left:1596px;top:200px;width:1px;height:1.5px;background:#000000;opacity:0.38"></div>
<div class="a" style="left:1598px;top:200px;width:6px;height:1.5px;background:#0451a5;opacity:0.38"></div>
<div class="t" style="left:1027.1px;top:447px;font-size:12px;color:#237893;font-family:'Liberation Mono',monospace;">16</div>
<div class="a" style="left:1654px;top:170px;width:1px;height:1089px;background:#ececec"></div>
<div class="a" style="left:1655px;top:171px;width:10px;height:3px;background:#2b2b2b;border-top-left-radius:1px"></div>
<div class="a" style="left:300px;top:1272px;width:1370px;height:40px;background:#eff4fe;border-radius:6px"></div>
<div class="a" style="left:303px;top:1276px;width:76px;height:32px;background:#000;border-radius:6px"></div>
<div class="t" style="left:319.5px;top:1285px;font-size:14px;color:#fff;-webkit-text-stroke:0.35px #fff;">Submit</div>
<div class="a" style="left:389px;top:1276px;width:73px;height:30px;border:1px solid #cdd6e2;border-radius:6px;background:#fff"></div>
<div class="t" style="left:405.5px;top:1285px;font-size:14px;">Cancel</div>
<div class="a" style="left:474px;top:1276px;width:30px;height:30px;border:1px solid #cdd6e2;border-radius:6px;background:#fff"></div>
<svg class="a" style="left:482px;top:1284px" width="16" height="16" viewBox="0 0 16 16"><g stroke="#1f1f1f" stroke-width="1.2" fill="none" stroke-linecap="round"><path d="M5 5.4 A3 3 0 0 1 11 5.4"/><path d="M1.4 4.2 L4.6 5.6 H11.4 L14.6 4.2"/><path d="M4.6 5.6 V9.6 C4.6 12.6 6 14.9 8 14.9 C10 14.9 11.4 12.6 11.4 9.6 V5.6"/><path d="M1.1 8.4 H4.6 M11.4 8.4 H14.9 M1.9 13.8 L4.7 11.2 M14.1 13.8 L11.3 11.2"/></g></svg>
<div class="t" style="left:516px;top:1285px;font-size:14px;">Only the data from the form will be sent. Empty fields will be removed recursively.</div>
<div class="t" style="left:1053px;top:1348px;font-size:14px;color:#7a7c80;letter-spacing:-0.1px;">Cozystack © 2026</div>
</body></html>
